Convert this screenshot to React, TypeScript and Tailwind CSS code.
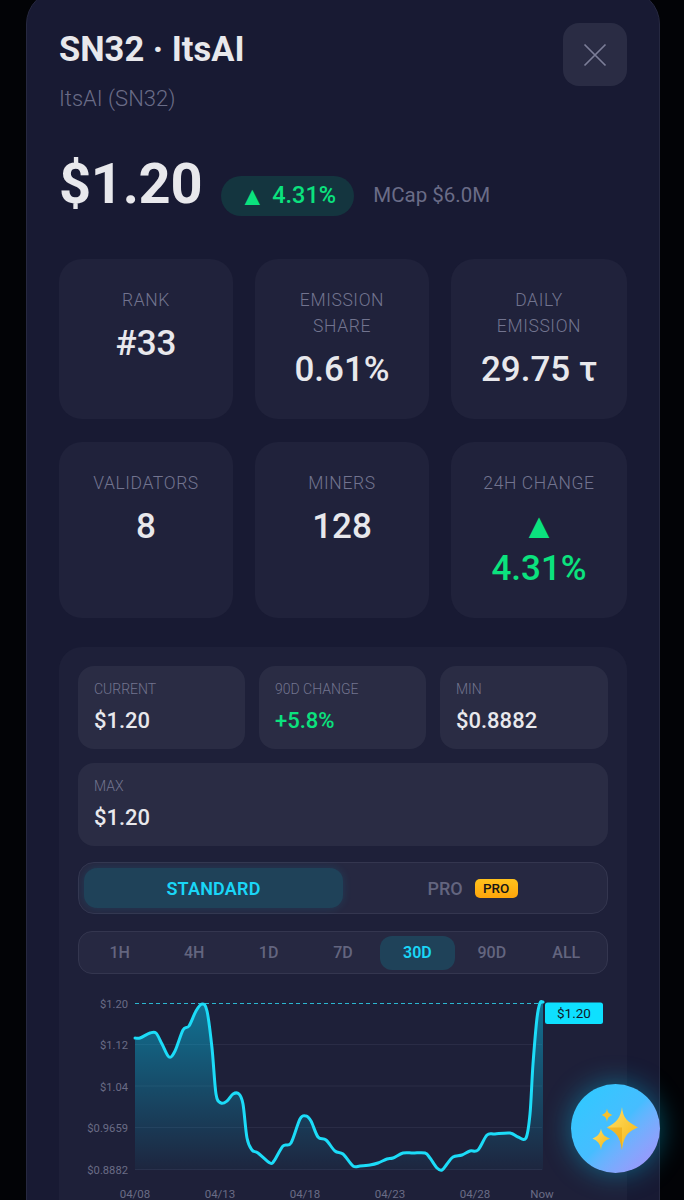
import React from "react";

const pts: [number, number][] = [
  [135,1037],[140,1037],[150,1032],[156,1032],[162,1043],[169,1056],[175,1050],[183,1029],[189,1025],[196,1010],[202,1003],[207,1010],[212,1047],[216,1093],[221,1102],[227,1100],[233,1093],[239,1093],[243,1103],[247,1137],[252,1149],[258,1152],[270,1162],[274,1160],[283,1145],[291,1142],[300,1118],[306,1115],[311,1120],[318,1136],[326,1139],[335,1150],[343,1153],[353,1165],[360,1165],[370,1164],[378,1162],[387,1158],[393,1157],[403,1152],[413,1152],[425,1152],[430,1157],[437,1167],[442,1169],[447,1163],[453,1156],[462,1154],[470,1150],[478,1149],[487,1134],[495,1133],[510,1132],[518,1136],[526,1137],[530,1113],[533,1063],[537,1017],[540,1002],[543,1001],
];
const OX = 78, OY = 985;
function linePath() {
  const p = pts.map(([x, y]) => [x - OX, y - OY]);
  let d = `M${p[0][0]} ${p[0][1]}`;
  for (let i = 0; i < p.length - 1; i++) {
    const a = p[Math.max(0, i - 1)], b = p[i], c = p[i + 1], e = p[Math.min(p.length - 1, i + 2)];
    const c1x = b[0] + (c[0] - a[0]) / 6, c1y = b[1] + (c[1] - a[1]) / 6;
    const c2x = c[0] - (e[0] - b[0]) / 6, c2y = c[1] - (e[1] - b[1]) / 6;
    d += `C${c1x.toFixed(1)} ${c1y.toFixed(1)} ${c2x.toFixed(1)} ${c2y.toFixed(1)} ${c[0]} ${c[1]}`;
  }
  return d;
}
const LINE = linePath();
const AREA = `${LINE}L465 184L57 184Z`;

function StatCard({ label, children }: { label: React.ReactNode; children: React.ReactNode }) {
  return (
    <div className="rounded-[23px] bg-[#20223b] px-2 pb-[27px] pt-[28px] text-center">
      <div className="text-[17.5px] leading-[26px] tracking-[0.6px] font-light text-[#72748f]">{label}</div>
      <div className="mt-[10px] text-[35px] leading-[42.5px] font-medium text-[#e8e8ec]">{children}</div>
    </div>
  );
}

function Metric({ label, value, green }: { label: string; value: string; green?: boolean }) {
  return (
    <div className="flex h-[83px] flex-col rounded-[16px] bg-[#2a2c44] pl-4 pt-[14px]">
      <div className="text-[14px] leading-[18px] font-light text-[#72748f]">{label}</div>
      <div className={`mt-[9px] text-[22px] leading-[28px] font-medium ${green ? "text-[#0be27e]" : "text-[#e8e8ec]"}`}>{value}</div>
    </div>
  );
}

const tabs = ["1H", "4H", "1D", "7D", "30D", "90D", "ALL"];

export default function App() {
  return (
    <div className="relative h-[1200px] w-[684px] overflow-hidden bg-[#020306] font-['Roboto',sans-serif]">
      <div className="ml-[26px] -mt-[10px] h-[1300px] w-[634px] rounded-[34px] border border-[#262840] bg-[#181a33] px-[32px] pt-[32px]">
        <div className="flex items-start justify-between">
          <div className="pt-[7px]">
            <div className="text-[34.5px] leading-[38px] font-bold text-[#e8e8ec]">SN32 · ItsAI</div>
            <div className="mt-[18px] text-[22px] leading-[26px] font-light text-[#6a6c87]">ItsAI (SN32)</div>
          </div>
          <div className="flex h-[63px] w-[64px] items-center justify-center rounded-[16px] bg-[#2a2c44]">
            <svg width="24" height="24" viewBox="0 0 24 24" fill="none" stroke="#7c7e98" strokeWidth="1.7">
              <path d="M1.5 1.5L22.5 22.5M22.5 1.5L1.5 22.5" />
            </svg>
          </div>
        </div>

        <div className="mt-[39px] flex items-center">
          <div className="text-[56px] leading-[66px] font-bold tracking-[-0.3px] text-[#e8e8ec]">$1.20</div>
          <div className="ml-[19px] mt-[23px] flex h-[40px] w-[133px] items-center justify-center gap-[7px] rounded-full bg-[#14353f] text-[23.5px] font-medium text-[#0be27e]">
            <span className="text-[26px] leading-[26px]">▲</span>
            <span>4.31%</span>
          </div>
          <div className="ml-[19px] mt-[23px] text-[20.5px] text-[#6a6c87]">MCap $6.0M</div>
        </div>

        <div className="mt-[42px] grid grid-cols-[174px_174px_1fr] gap-x-[22px] gap-y-[23px]">
          <StatCard label="RANK">#33</StatCard>
          <StatCard label={<>EMISSION<br />SHARE</>}>0.61%</StatCard>
          <StatCard label={<>DAILY<br />EMISSION</>}>29.75 τ</StatCard>
          <StatCard label="VALIDATORS">8</StatCard>
          <StatCard label="MINERS">128</StatCard>
          <StatCard label="24H CHANGE">
            <div className="text-[#0be27e]">▲<br />4.31%</div>
          </StatCard>
        </div>

        <div className="mt-[29.5px] h-[600px] rounded-[23px] bg-[#1e2039] px-[19px] pt-[19px]">
          <div className="grid grid-cols-[167px_167px_1fr] gap-x-[14px] gap-y-[14px]">
            <Metric label="CURRENT" value="$1.20" />
            <Metric label="90D CHANGE" value="+5.8%" green />
            <Metric label="MIN" value="$0.8882" />
            <div className="col-span-3"><Metric label="MAX" value="$1.20" /></div>
          </div>

          <div className="mt-[16px] flex h-[52px] items-center rounded-[16px] border border-[#34364f] bg-[#262841] px-[5px]">
            <div className="flex h-[40px] w-[259px] items-center justify-center rounded-[13px] bg-[#1f4259] text-[18px] font-semibold tracking-[0.2px] text-[#1ad6f7] shadow-[0_0_10px_rgba(0,212,255,0.12)]">STANDARD</div>
            <div className="flex flex-1 items-center justify-center gap-[12px] text-[18px] font-medium text-[#63657f]">
              <span>PRO</span>
              <span className="flex h-[19px] w-[43px] items-center justify-center rounded-[5px] bg-gradient-to-b from-[#ffc21c] to-[#ffa50a] text-[13.5px] font-medium text-[#161616]">PRO</span>
            </div>
          </div>

          <div className="mt-[17px] flex h-[43px] items-center rounded-[14px] border border-[#34364f] bg-[#262841] px-[3.5px]">
            {tabs.map((t) => (
              <div
                key={t}
                className={
                  t === "30D"
                    ? "flex h-[34px] flex-1 items-center justify-center rounded-[12px] bg-[#1f4259] text-[16px] font-semibold text-[#1ad6f7]"
                    : "flex h-[34px] flex-1 items-center justify-center text-[16px] font-medium text-[#63657f]"
                }
              >
                {t}
              </div>
            ))}
          </div>

          <svg className="mt-[12px] block overflow-visible" width="530" height="215" viewBox="0 0 530 215" fontFamily="Roboto, sans-serif">
            <defs>
              <linearGradient id="area" x1="0" y1="0" x2="0" y2="1">
                <stop offset="0" stopColor="#00d4ff" stopOpacity="0.46" />
                <stop offset="1" stopColor="#00d4ff" stopOpacity="0.03" />
              </linearGradient>
            </defs>
            {[58.5, 100, 141.5, 183.5].map((y) => (
              <line key={y} x1="57" x2="464" y1={y} y2={y} stroke="#2a2c46" strokeWidth="1" />
            ))}
            <path d={AREA} fill="url(#area)" />
            <line x1="57" x2="464" y1="17.5" y2="17.5" stroke="#2bb6d0" strokeWidth="1.2" strokeDasharray="4 3" />
            <path d={LINE} fill="none" stroke="#1cdcf8" strokeWidth="3" strokeLinejoin="round" strokeLinecap="round" />
            {[["$1.20", 22], ["$1.12", 63], ["$1.04", 105], ["$0.9659", 146], ["$0.8882", 188]].map(([t, y]) => (
              <text key={t as string} x="50" y={y as number} textAnchor="end" fontSize="11.2" fontWeight="400" fill="#6a6c86">{t}</text>
            ))}
            {[["04/08", 57], ["04/13", 142], ["04/18", 227], ["04/23", 312], ["04/28", 397], ["Now", 464]].map(([t, x]) => (
              <text key={t as string} x={x as number} y="211.500" textAnchor="middle" fontSize="11.5" fontWeight="400" fill="#6a6c86">{t}</text>
            ))}
            <rect x="467" y="16.5" width="58" height="21.5" rx="2.5" fill="#0ee0ff" />
            <text x="496" y="31.5" textAnchor="middle" fontSize="13.5" fill="#10182a">$1.20</text>
          </svg>
        </div>
      </div>

      <div className="absolute left-[571px] top-[1084px] flex h-[89px] w-[89px] items-center justify-center rounded-full bg-gradient-to-br from-[#27cbff] via-[#46bdff] to-[#a78bfa] shadow-[0_0_28px_rgba(0,212,255,0.4)]">
        <svg width="48" height="46" viewBox="0 0 48 46">
          <defs>
            <linearGradient id="sp" x1="0" y1="0" x2="1" y2="1">
              <stop offset="0" stopColor="#ffe066" />
              <stop offset="1" stopColor="#f5b414" />
            </linearGradient>
          </defs>
          <path d="M30 1C31 12 35 15.500 46 21.500C35 26 32 30 30 44C28 30 24 26 15 21.500C25 16 28.500 12 30 1Z" fill="url(#sp)" />
          <path d="M30 44C28 30 24 26 15 21.500L30 21.500Z" fill="#e9a30f" opacity="0.55" />
          <path d="M9 22.500C10 28 12 30.500 18 32.500C12 35 10 37 9 44C8 37 5.500 35 0.500 32.500C5.500 30.500 8 28 9 22.500Z" fill="url(#sp)" />
          <path d="M15 2.500C15.600 6 16.500 7.500 20.500 9C16.500 10.500 15.600 12 15 16C14.400 12 13.500 10.500 9.500 9C13.500 7.500 14.400 6 15 2.500Z" fill="#f7c02b" />
        </svg>
      </div>
    </div>
  );
}
